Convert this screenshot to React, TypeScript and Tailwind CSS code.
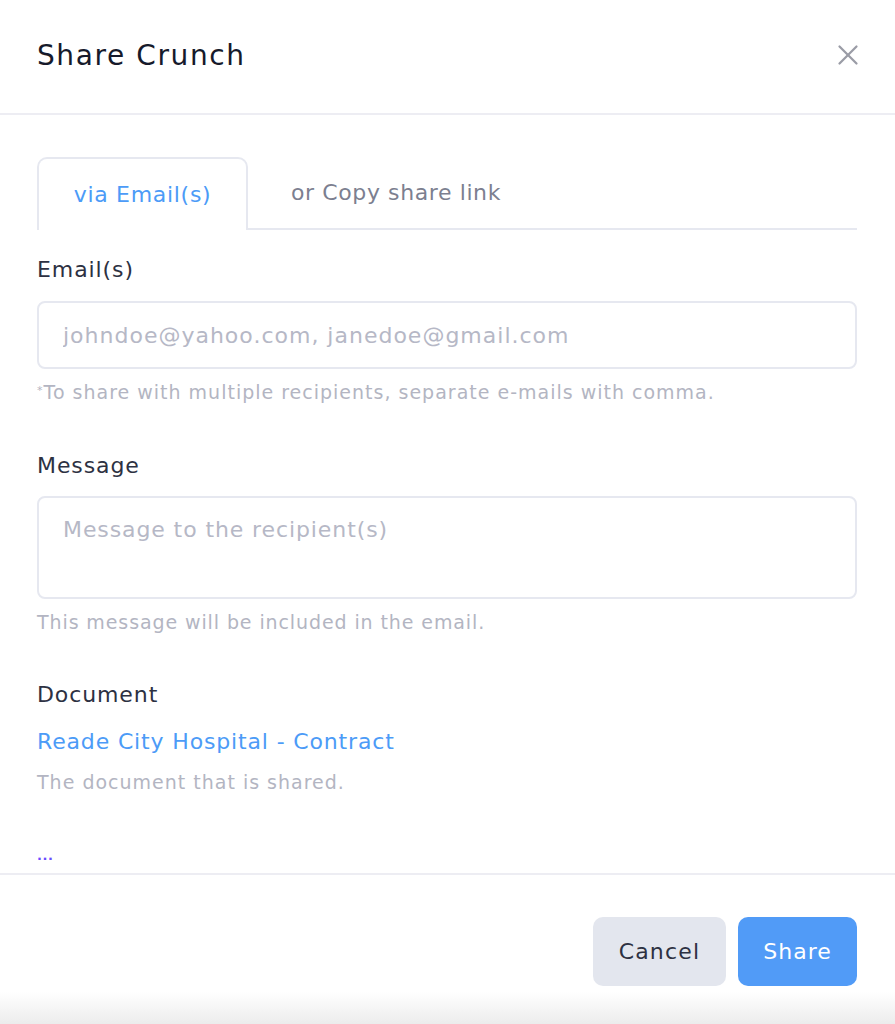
import { X } from "lucide-react";

const font = { fontFamily: '"DejaVu Sans", "Open Sans", sans-serif' };

export default function App() {
  return (
    <div className="w-[895px] h-[1024px] bg-white flex flex-col overflow-hidden" style={font}>
      {/* header */}
      <div className="h-[115px] shrink-0 border-b-2 border-[#ededf3] flex items-center justify-between pl-[37px] pr-[30px]">
        <h1 className="text-[28px] font-medium leading-none text-[#161a2b] -mt-[2px] tracking-[1.6px]">
          Share Crunch
        </h1>
        <button type="button" className="text-[#9a9ca6] -mt-[4px]">
          <X className="w-[34px] h-[34px]" strokeWidth={1.6} />
        </button>
      </div>

      {/* body */}
      <div className="h-[758px] shrink-0 pl-[37px] pr-[38px] pt-[42px] flex flex-col">
        <div className="flex h-[73px] border-b-2 border-[#e6e8f0]">
          <div className="w-[211px] -mb-[2px] rounded-t-[10px] border-2 border-b-0 border-[#e6e8f0] bg-white flex items-center justify-center text-[22px] tracking-[0.7px] text-[#4c9bf7]">
            via Email(s)
          </div>
          <div className="px-[43px] flex items-center text-[22px] tracking-[0.6px] text-[#7c7f90]">
            or Copy share link
          </div>
        </div>

        <label className="mt-[25px] text-[22px] leading-[30px] tracking-[0.9px] text-[#2d3142]">Email(s)</label>
        <input
          className="mt-[16px] h-[68px] w-full rounded-[8px] border-2 border-[#e6e8f0] px-[24px] text-[22px] tracking-[1px] outline-none placeholder:text-[#b6b8c6]"
          placeholder="johndoe@yahoo.com, janedoe@gmail.com"
        />
        <p className="mt-[10px] text-[19px] leading-[26px] tracking-[1px] text-[#b3b5c2]">
          <sup className="text-[11px]">*</sup>To share with multiple recipients, separate e-mails with comma.
        </p>

        <label className="mt-[46px] text-[22px] leading-[30px] tracking-[0.9px] text-[#2d3142]">Message</label>
        <textarea
          className="mt-[15px] h-[103px] w-full resize-none rounded-[8px] border-2 border-[#e6e8f0] px-[24px] pt-[17px] text-[22px] leading-[30px] tracking-[0.9px] outline-none placeholder:text-[#b6b8c6]"
          placeholder="Message to the recipient(s)"
        />
        <p className="mt-[10px] text-[19px] leading-[26px] tracking-[0.9px] text-[#b3b5c2]">
          This message will be included in the email.
        </p>

        <label className="mt-[45px] text-[22px] leading-[30px] tracking-[0.9px] text-[#2d3142]">Document</label>
        <a className="mt-[17px] text-[22px] leading-[30px] tracking-[0.85px] text-[#4c9bf7]">
          Reade City Hospital - Contract
        </a>
        <p className="mt-[12px] text-[19px] leading-[26px] tracking-[1px] text-[#b3b5c2]">
          The document that is shared.
        </p>

        <span className="mt-[53px] text-[13px] leading-[16px] font-bold text-[#6b4cff] tracking-[0.5px]">...</span>
      </div>

      {/* footer */}
      <div className="flex-1 border-t-2 border-[#ededf3] flex flex-col">
        <div className="flex justify-end gap-[12px] pr-[38px] pt-[42px]">
          <button
            type="button"
            className="h-[69px] w-[133px] rounded-[10px] bg-[#e3e6ee] text-[22px] tracking-[1.2px] text-[#2d3142]"
          >
            Cancel
          </button>
          <button
            type="button"
            className="h-[69px] w-[119px] rounded-[10px] bg-[#519bf7] text-[22px] tracking-[1px] text-white"
          >
            Share
          </button>
        </div>
        <div className="mt-auto h-[32px] bg-gradient-to-b from-white to-[#ececec]" />
      </div>
    </div>
  );
}
